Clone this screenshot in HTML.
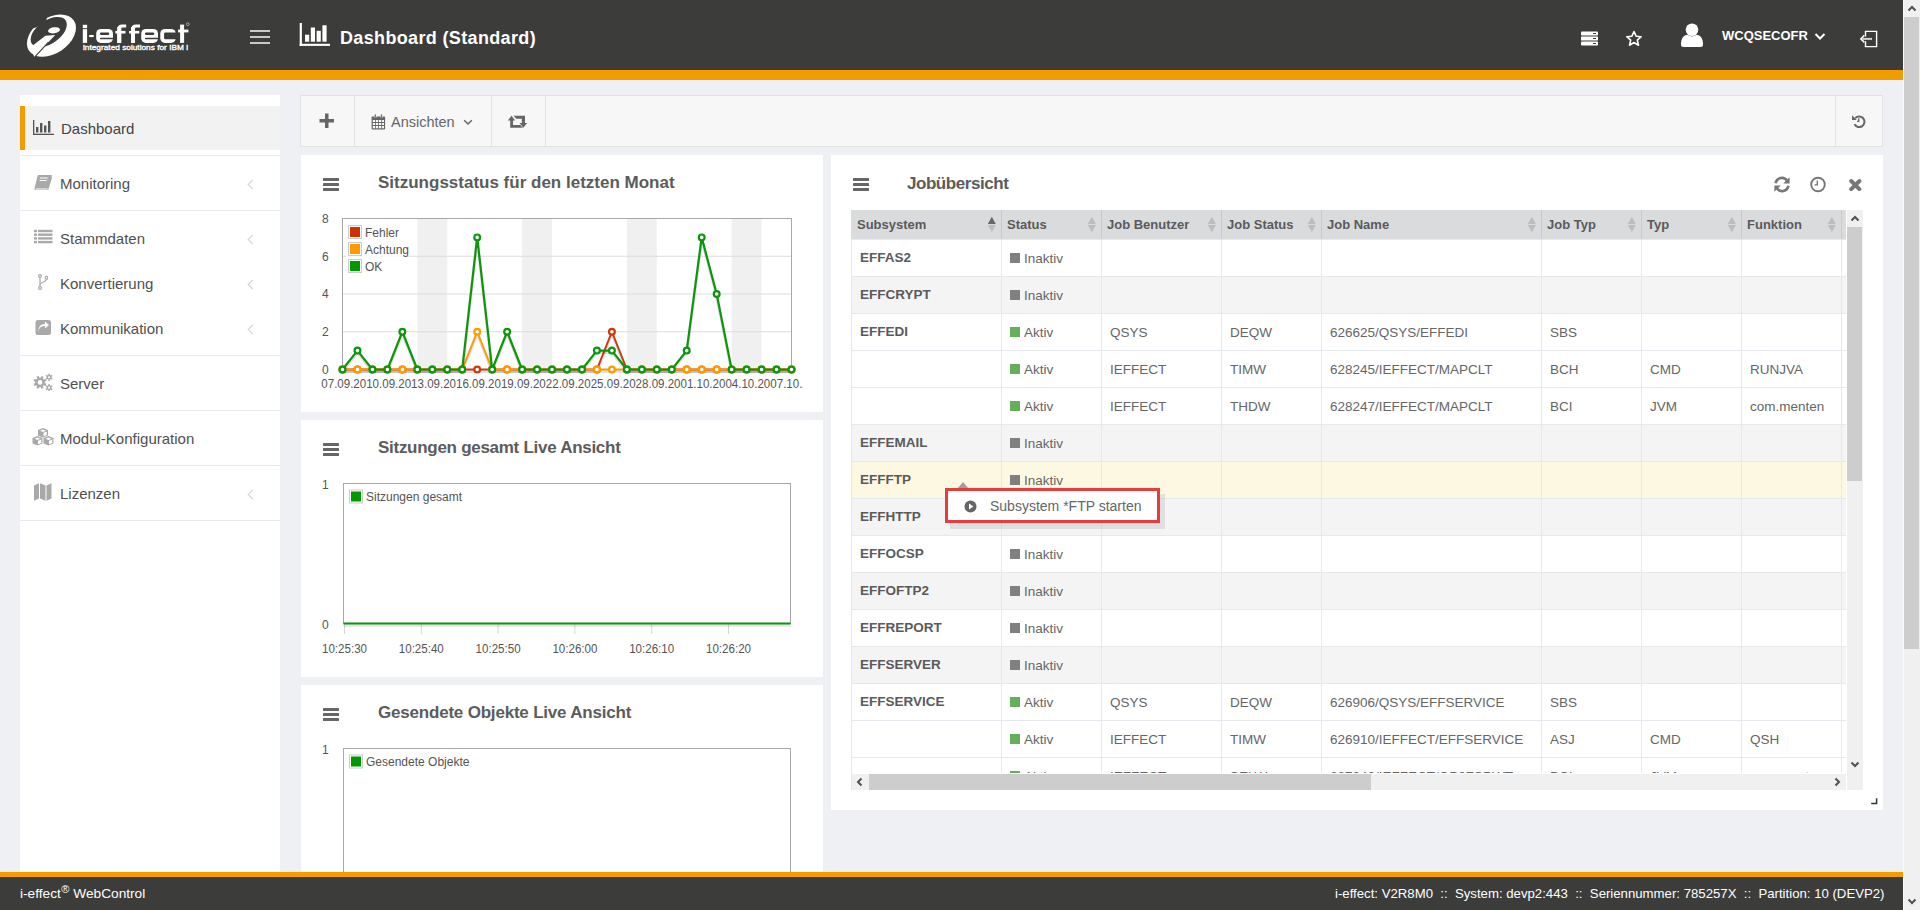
<!DOCTYPE html>
<html><head><meta charset="utf-8">
<style>
*{box-sizing:border-box;margin:0;padding:0}
html,body{width:1920px;height:910px;overflow:hidden}
body{background:#eef0f4;font-family:"Liberation Sans",sans-serif;position:relative;color:#555}
.abs{position:absolute}
#hdr{left:0;top:0;width:1903px;height:70px;background:#3c3c3b}
#hdrbar{left:0;top:70px;width:1903px;height:10px;background:#f39c00}
#ftrbar{left:0;top:872px;width:1903px;height:5px;background:#f39c00}
#ftr{left:0;top:877px;width:1903px;height:33px;background:#3c3c3b;color:#fff;font-size:13px}
#vscroll{left:1903px;top:0;width:17px;height:910px;background:#f0f0f0}
#side{left:20px;top:95px;width:260px;height:777px;background:#fff}
.sep{position:absolute;left:0;width:260px;height:1px;background:#eaeaea}
.mi{position:absolute;left:40px;font-size:15px;color:#505050;white-space:nowrap}
.chev{position:absolute;left:229px;width:7px;height:7px;border-left:1.3px solid #cfcfcf;border-bottom:1.3px solid #cfcfcf;transform:rotate(45deg)}
#tb{left:300px;top:95px;width:1583px;height:52px;background:#f7f7f7;border:1px solid #e3e3e3}
.tbsep{position:absolute;top:0;width:1px;height:50px;background:#e3e3e3}
.panel{position:absolute;background:#fff}
.ptitle{position:absolute;font-size:17px;font-weight:bold;color:#5c5c5c;white-space:nowrap}
.burger{position:absolute;width:16px;height:13px}
.burger i{position:absolute;left:0;width:16px;height:2.6px;background:#666;border-radius:0.5px}
svg text{font-family:"Liberation Sans",sans-serif}
.th{position:absolute;top:7px;font-size:13px;font-weight:bold;color:#5a5a5a;white-space:nowrap}
.td{position:absolute;font-size:13.5px;color:#666;white-space:nowrap}
.tdb{position:absolute;font-size:13.5px;font-weight:bold;color:#5a5a5a;white-space:nowrap}
</style></head>
<body>
<div id="hdr" class="abs">
 <svg class="abs" style="left:0;top:0" width="200" height="70" viewBox="0 0 200 70">
  <ellipse cx="51.45" cy="35.7" rx="27.04" ry="17.8" transform="rotate(-34 51.45 35.7)" fill="#fff"/>
  <ellipse cx="48.75" cy="32" rx="20.5" ry="11.6" transform="rotate(-34.7 48.75 32)" fill="#3c3c3b"/>
  <path fill="#3c3c3b" d="M10 5 H48 L46.5 20.4 L36.6 27.3 L10 35 Z"/>
  <path fill="#fff" d="M45.4 35.7 L55.2 35.1 L34.3 57.2 L32 50 L33.4 44.9 Z"/>
  <path d="M48.5 42.2 L33.3 58.6" stroke="#3c3c3b" stroke-width="1.1"/>
  <ellipse cx="54" cy="30.3" rx="6" ry="3" transform="rotate(-8 54 30.3)" fill="#fff"/>
  <rect x="82.8" y="24.8" width="4.3" height="3.4" fill="#fff"/><rect x="82.8" y="29.2" width="4.3" height="13.7" fill="#fff"/><rect x="89.2" y="35" width="4.5" height="2.1" fill="#fff"/><rect x="96.2" y="28.9" width="16.8" height="14" rx="4.6" fill="#fff"/><rect x="100.0" y="32.5" width="9.2" height="2.4" rx="1" fill="#3c3c3b"/><rect x="100.0" y="37.7" width="13.5" height="1.6" rx="0.6" fill="#3c3c3b"/><rect x="117.3" y="27" width="3.9" height="15.9" fill="#fff"/><path d="M117.3 42.9 V29.5 Q117.3 24.6 122.2 24.6 H126.2 V27.5 H122.5 Q121.2 27.5 121.2 28.8 V42.9 Z" fill="#fff"/><rect x="115.3" y="30.9" width="10.2" height="2.6" fill="#fff"/><rect x="131.1" y="27" width="3.9" height="15.9" fill="#fff"/><path d="M131.1 42.9 V29.5 Q131.1 24.6 136.0 24.6 H140.0 V27.5 H136.29999999999998 Q135.0 27.5 135.0 28.8 V42.9 Z" fill="#fff"/><rect x="129.1" y="30.9" width="10.2" height="2.6" fill="#fff"/><rect x="141.2" y="28.9" width="16.8" height="14" rx="4.6" fill="#fff"/><rect x="145.0" y="32.5" width="9.2" height="2.4" rx="1" fill="#3c3c3b"/><rect x="145.0" y="37.7" width="13.5" height="1.6" rx="0.6" fill="#3c3c3b"/><rect x="160.3" y="28.9" width="15.4" height="14" rx="4.6" fill="#fff"/><rect x="164.1" y="32.5" width="13" height="6.8" rx="1.2" fill="#3c3c3b"/><rect x="180.1" y="24.6" width="4" height="18.3" fill="#fff"/><rect x="178.1" y="29.6" width="10.3" height="2.8" fill="#fff"/>
  <text x="83" y="50.4" fill="#fff" stroke="#fff" stroke-width="0.3" font-family="Liberation Sans" font-size="6.6" textLength="105" lengthAdjust="spacingAndGlyphs">integrated solutions for IBM i</text>
  <circle cx="187.8" cy="24.2" r="1.4" fill="none" stroke="#ddd" stroke-width="0.6"/>
 </svg>
 <div class="abs" style="left:250px;top:30px;width:20px;height:2px;background:#c9c9c9"></div>
 <div class="abs" style="left:250px;top:36px;width:20px;height:2px;background:#c9c9c9"></div>
 <div class="abs" style="left:250px;top:42px;width:20px;height:2px;background:#c9c9c9"></div>
 <svg class="abs" style="left:299px;top:22px" width="32" height="25" viewBox="0 0 32 25">
  <g fill="#fff"><rect x="0.7" y="1" width="2.2" height="23"/><rect x="0.7" y="21.8" width="30.3" height="2.1"/>
  <rect x="6" y="12.7" width="4.2" height="7"/><rect x="11.8" y="5.5" width="4.2" height="14.2"/><rect x="17.6" y="8.8" width="4.2" height="10.9"/><rect x="23.4" y="3.3" width="4.2" height="16.4"/></g>
 </svg>
 <div class="abs" style="left:340px;top:28px;font-size:18px;font-weight:bold;color:#fff;letter-spacing:0.35px;white-space:nowrap">Dashboard (Standard)</div>
 <svg class="abs" style="left:1580px;top:31px" width="19" height="15" viewBox="0 0 19 15">
  <g fill="#fff"><rect x="1" y="0.5" width="17" height="4" rx="1"/><rect x="1" y="5.5" width="17" height="4" rx="0.5"/><rect x="1" y="10.5" width="17" height="4" rx="1"/></g>
  <g fill="#3c3c3b"><rect x="13" y="2" width="3" height="1"/><rect x="13" y="7" width="3" height="1"/><rect x="13" y="12" width="3" height="1"/></g>
 </svg>
 <svg class="abs" style="left:1625px;top:30px" width="18" height="17" viewBox="0 0 18 17">
  <path d="M9 1.5 L11.1 6.2 L16.2 6.7 L12.3 10.1 L13.5 15.2 L9 12.5 L4.5 15.2 L5.7 10.1 L1.8 6.7 L6.9 6.2 Z" fill="none" stroke="#fff" stroke-width="1.6" stroke-linejoin="round"/>
 </svg>
 <svg class="abs" style="left:1680px;top:23px" width="24" height="25" viewBox="0 0 24 25">
  <g fill="#fff"><circle cx="12" cy="6.8" r="6.3"/><path d="M1 21.5 C1 16 3 12.5 7 11.8 L12 13.6 L17 11.8 C21 12.5 23 16 23 21.5 Q23 24 20.5 24 H3.5 Q1 24 1 21.5 Z"/></g>
 </svg>
 <div class="abs" style="left:1722px;top:28px;font-size:13px;font-weight:bold;color:#fff;white-space:nowrap">WCQSECOFR</div>
 <svg class="abs" style="left:1814px;top:32px" width="12" height="9" viewBox="0 0 12 9">
  <path d="M1.5 2 L6 6.5 L10.5 2" fill="none" stroke="#fff" stroke-width="2"/>
 </svg>
 <svg class="abs" style="left:1855px;top:25px" width="30" height="27" viewBox="1855 25 30 27">
  <path d="M1865.5 36.6 V31.4 H1876.6 V46.6 H1865.5 V41.2" fill="none" stroke="#fff" stroke-width="1.4"/>
  <path d="M1864.3 35.4 L1860.8 38.9 L1864.3 42.4" fill="none" stroke="#fff" stroke-width="1.5"/>
  <rect x="1862.2" y="37.9" width="9.8" height="2" fill="#d0d0d0"/>
 </svg>
</div>
<div id="hdrbar" class="abs"></div>

<div id="side" class="abs">
 <div class="abs" style="left:0;top:11px;width:260px;height:44px;background:#f2f2f2"></div>
 <div class="abs" style="left:0;top:11px;width:5px;height:44px;background:#f39c00"></div>
 <div class="sep" style="top:60px"></div>
 <div class="sep" style="top:115px"></div>
 <div class="sep" style="top:260px"></div>
 <div class="sep" style="top:315px"></div>
 <div class="sep" style="top:370px"></div>
 <div class="sep" style="top:425px"></div>
 <svg class="abs" style="left:12px;top:24px" width="23" height="17" viewBox="0 0 23 17">
  <g fill="#555"><rect x="1" y="1" width="1.3" height="15"/><rect x="1" y="14.7" width="21" height="1.3"/>
  <rect x="4" y="8" width="2.4" height="5.5"/><rect x="8" y="4" width="2.4" height="9.5"/><rect x="12" y="6.5" width="2.4" height="7"/><rect x="16" y="2" width="2.4" height="11.5"/></g>
 </svg>
 <div class="mi" style="top:25px;left:41px;color:#444">Dashboard</div>

 <svg class="abs" style="left:14px;top:79px" width="19" height="17" viewBox="0 0 19 17">
  <path d="M4.5 1 H17 C17.6 1 18 1.4 17.8 2 L14.5 13.5 C14.3 14.2 13.8 14.5 13 14.5 H2 L1.3 15.5 H13.5 L17.5 3 L18.2 3.3 L14.2 16 H1.2 C0.5 16 0.2 15.5 0.4 14.8 L3.6 1.8 C3.8 1.3 4 1 4.5 1 Z" fill="#a9a9a9"/>
  <rect x="7" y="3.5" width="7.5" height="1" fill="#fff" transform="skewX(-12)"/>
  <rect x="7" y="6" width="7" height="1" fill="#fff" transform="skewX(-12)"/>
 </svg>
 <div class="mi" style="top:80px">Monitoring</div>
 <div class="chev" style="top:86px"></div>

 <svg class="abs" style="left:14px;top:134px" width="19" height="15" viewBox="0 0 19 15">
  <g fill="#a9a9a9"><rect x="0" y="0.8" width="3" height="2.4"/><rect x="4" y="0.8" width="14.5" height="2.4"/>
  <rect x="0" y="4.5" width="3" height="2.4"/><rect x="4" y="4.5" width="14.5" height="2.4"/>
  <rect x="0" y="8.2" width="3" height="2.4"/><rect x="4" y="8.2" width="14.5" height="2.4"/>
  <rect x="0" y="11.9" width="3" height="2.4"/><rect x="4" y="11.9" width="14.5" height="2.4"/></g>
 </svg>
 <div class="mi" style="top:135px">Stammdaten</div>
 <div class="chev" style="top:141px"></div>

 <svg class="abs" style="left:16px;top:179px" width="12" height="16" viewBox="0 0 12 16">
  <g fill="none" stroke="#a9a9a9" stroke-width="1.2"><circle cx="4" cy="2" r="1.4"/><circle cx="4" cy="14" r="1.4"/><circle cx="10.5" cy="3.8" r="1.4"/>
  <path d="M4 3.4 V12.6"/><path d="M10.5 5.2 C10.5 8 4.5 8 4.2 10.5"/></g>
 </svg>
 <div class="mi" style="top:180px">Konvertierung</div>
 <div class="chev" style="top:186px"></div>

 <svg class="abs" style="left:15px;top:224px" width="17" height="16" viewBox="0 0 17 16">
  <rect x="0.5" y="1" width="15.5" height="15" rx="2.5" fill="#a9a9a9"/>
  <path d="M3.5 13.5 C3.5 9 6 7 10 7 V9.5 L14 6 L10 2.5 V5 C5.5 5 3 8 3.5 13.5 Z" fill="#fff"/>
 </svg>
 <div class="mi" style="top:225px">Kommunikation</div>
 <div class="chev" style="top:231px"></div>

 <svg class="abs" style="left:13px;top:278px" width="21" height="18" viewBox="0 0 21 18"><circle cx="7" cy="9.4" r="4.7" fill="#a9a9a9"/><rect x="5.80" y="2.90" width="2.4" height="2.8" fill="#a9a9a9" transform="rotate(22.5 7 9.4)"/><rect x="5.80" y="2.90" width="2.4" height="2.8" fill="#a9a9a9" transform="rotate(67.5 7 9.4)"/><rect x="5.80" y="2.90" width="2.4" height="2.8" fill="#a9a9a9" transform="rotate(112.5 7 9.4)"/><rect x="5.80" y="2.90" width="2.4" height="2.8" fill="#a9a9a9" transform="rotate(157.5 7 9.4)"/><rect x="5.80" y="2.90" width="2.4" height="2.8" fill="#a9a9a9" transform="rotate(202.5 7 9.4)"/><rect x="5.80" y="2.90" width="2.4" height="2.8" fill="#a9a9a9" transform="rotate(247.5 7 9.4)"/><rect x="5.80" y="2.90" width="2.4" height="2.8" fill="#a9a9a9" transform="rotate(292.5 7 9.4)"/><rect x="5.80" y="2.90" width="2.4" height="2.8" fill="#a9a9a9" transform="rotate(337.5 7 9.4)"/><circle cx="7" cy="9.4" r="2.3" fill="#fff"/><circle cx="16.1" cy="4.3" r="2.4" fill="#a9a9a9"/><rect x="15.40" y="0.60" width="1.4" height="2.3" fill="#a9a9a9" transform="rotate(0.0 16.1 4.3)"/><rect x="15.40" y="0.60" width="1.4" height="2.3" fill="#a9a9a9" transform="rotate(60.0 16.1 4.3)"/><rect x="15.40" y="0.60" width="1.4" height="2.3" fill="#a9a9a9" transform="rotate(120.0 16.1 4.3)"/><rect x="15.40" y="0.60" width="1.4" height="2.3" fill="#a9a9a9" transform="rotate(180.0 16.1 4.3)"/><rect x="15.40" y="0.60" width="1.4" height="2.3" fill="#a9a9a9" transform="rotate(240.0 16.1 4.3)"/><rect x="15.40" y="0.60" width="1.4" height="2.3" fill="#a9a9a9" transform="rotate(300.0 16.1 4.3)"/><circle cx="16.1" cy="4.3" r="1.1" fill="#fff"/><circle cx="16.1" cy="14.7" r="2.4" fill="#a9a9a9"/><rect x="15.40" y="11.00" width="1.4" height="2.3" fill="#a9a9a9" transform="rotate(0.0 16.1 14.7)"/><rect x="15.40" y="11.00" width="1.4" height="2.3" fill="#a9a9a9" transform="rotate(60.0 16.1 14.7)"/><rect x="15.40" y="11.00" width="1.4" height="2.3" fill="#a9a9a9" transform="rotate(120.0 16.1 14.7)"/><rect x="15.40" y="11.00" width="1.4" height="2.3" fill="#a9a9a9" transform="rotate(180.0 16.1 14.7)"/><rect x="15.40" y="11.00" width="1.4" height="2.3" fill="#a9a9a9" transform="rotate(240.0 16.1 14.7)"/><rect x="15.40" y="11.00" width="1.4" height="2.3" fill="#a9a9a9" transform="rotate(300.0 16.1 14.7)"/><circle cx="16.1" cy="14.7" r="1.1" fill="#fff"/></svg>
 <div class="mi" style="top:280px">Server</div>

 <svg class="abs" style="left:11px;top:332px" width="24" height="20" viewBox="0 0 24 20">
  <g fill="#a9a9a9">
   <path d="M12 1 L17 3 V8.5 L12 10.5 L7 8.5 V3 Z"/>
   <path d="M6.5 9 L11.5 11 V16.5 L6.5 18.5 L1.5 16.5 V11 Z"/>
   <path d="M17.5 9 L22.5 11 V16.5 L17.5 18.5 L12.5 16.5 V11 Z"/>
  </g>
  <g fill="#fff"><path d="M12 2.5 L15 3.7 L12 5 L9 3.7 Z"/><path d="M12.5 5.8 L15.8 4.5 V8 L12.5 9.3 Z"/>
  <path d="M6.5 10.5 L9.5 11.7 L6.5 13 L3.5 11.7 Z"/><path d="M7 13.8 L10.3 12.5 V16 L7 17.3 Z"/>
  <path d="M17.5 10.5 L20.5 11.7 L17.5 13 L14.5 11.7 Z"/><path d="M18 13.8 L21.3 12.5 V16 L18 17.3 Z"/></g>
 </svg>
 <div class="mi" style="top:335px">Modul-Konfiguration</div>

 <svg class="abs" style="left:13px;top:387px" width="20" height="20" viewBox="0 0 20 20">
  <g fill="#a9a9a9"><path d="M1 3.5 L6 1.3 V16.5 L1 18.7 Z"/><path d="M7 1.3 L12.5 3.5 V18.7 L7 16.5 Z"/><path d="M13.5 3.5 L18.5 1.3 V16.5 L13.5 18.7 Z"/></g>
 </svg>
 <div class="mi" style="top:390px">Lizenzen</div>
 <div class="chev" style="top:396px"></div>
</div>

<div id="tb" class="abs">
 <div class="tbsep" style="left:53px"></div>
 <div class="tbsep" style="left:190px"></div>
 <div class="tbsep" style="left:244px"></div>
 <div class="tbsep" style="left:1534px"></div>
 <svg class="abs" style="left:18px;top:17px" width="16" height="16" viewBox="0 0 16 16">
  <path d="M6 0.5 H9.5 V6 H15 V9.5 H9.5 V15 H6 V9.5 H0.5 V6 H6 Z" fill="#666"/>
 </svg>
 <svg class="abs" style="left:70px;top:18px" width="15" height="16" viewBox="0 0 15 16">
  <g fill="#666"><rect x="0.6" y="2.5" width="13.5" height="13" rx="0.8"/></g>
  <g fill="#f7f7f7"><rect x="1.8" y="6" width="2.3" height="2"/><rect x="4.9" y="6" width="2.3" height="2"/><rect x="8" y="6" width="2.3" height="2"/><rect x="11.1" y="6" width="1.9" height="2"/>
  <rect x="1.8" y="9" width="2.3" height="2"/><rect x="4.9" y="9" width="2.3" height="2"/><rect x="8" y="9" width="2.3" height="2"/><rect x="11.1" y="9" width="1.9" height="2"/>
  <rect x="1.8" y="12" width="2.3" height="2.3"/><rect x="4.9" y="12" width="2.3" height="2.3"/><rect x="8" y="12" width="2.3" height="2.3"/><rect x="11.1" y="12" width="1.9" height="2.3"/>
  <rect x="3" y="0" width="2.5" height="3.5"/><rect x="9.2" y="0" width="2.5" height="3.5"/></g>
  <g fill="#666"><rect x="3.6" y="0.5" width="1.3" height="3.2"/><rect x="9.8" y="0.5" width="1.3" height="3.2"/></g>
 </svg>
 <div class="abs" style="left:90px;top:18px;font-size:14.5px;color:#666;white-space:nowrap">Ansichten</div>
 <svg class="abs" style="left:162px;top:23px" width="10" height="7" viewBox="0 0 10 7">
  <path d="M1.2 1.2 L5 5 L8.8 1.2" fill="none" stroke="#666" stroke-width="1.5"/>
 </svg>
 <svg class="abs" style="left:205px;top:19px" width="22" height="14" viewBox="0 0 22 14">
  <g fill="#666">
   <path d="M5.5 0.8 L9.2 5.5 H7 V10 H14.2 L16.8 12.8 H4.2 V5.5 H1.8 Z"/>
   <path d="M7.5 0.8 H19 V8 H21.2 L17.3 12.8 L13.5 8 H15.8 V3.7 H10.2 Z"/>
  </g>
 </svg>
 <svg class="abs" style="left:1550px;top:18px" width="15" height="14" viewBox="0 0 15 14">
  <path d="M4.2 4.2 A5.3 5.3 0 1 1 3.5 10.3" fill="none" stroke="#666" stroke-width="2"/>
  <path d="M1 1.2 V6 H5.8 Z" fill="#666"/>
  <path d="M7.8 4.3 V7.4 H6" fill="none" stroke="#666" stroke-width="1.3"/>
 </svg>
</div>

<div class="panel" style="left:301px;top:155px;width:522px;height:257px"></div>
<div class="burger" style="left:323px;top:178px"><i style="top:0"></i><i style="top:5px"></i><i style="top:10px"></i></div>
<div class="ptitle" style="left:378px;top:173px">Sitzungsstatus für den letzten Monat</div>
<svg class="abs" style="left:301px;top:155px" width="522" height="257" viewBox="301 155 522 257">
<defs><clipPath id="c1"><rect x="301" y="155" width="502" height="257"/></clipPath></defs>
<rect x="417.33" y="218.5" width="29.93" height="151.0" fill="#f0f0f0"/>
<rect x="522.10" y="218.5" width="29.93" height="151.0" fill="#f0f0f0"/>
<rect x="626.87" y="218.5" width="29.93" height="151.0" fill="#f0f0f0"/>
<rect x="731.63" y="218.5" width="29.93" height="151.0" fill="#f0f0f0"/>
<line x1="342.5" x2="791.5" y1="331.75" y2="331.75" stroke="#dcdcdc" stroke-width="1"/>
<line x1="342.5" x2="791.5" y1="294.00" y2="294.00" stroke="#dcdcdc" stroke-width="1"/>
<line x1="342.5" x2="791.5" y1="256.25" y2="256.25" stroke="#dcdcdc" stroke-width="1"/>
<rect x="342.5" y="218.5" width="449.0" height="151.0" fill="none" stroke="#a8a8a8" stroke-width="1"/>
<text x="325.4" y="373.80" text-anchor="middle" font-size="12" fill="#545454">0</text>
<text x="325.4" y="336.05" text-anchor="middle" font-size="12" fill="#545454">2</text>
<text x="325.4" y="298.30" text-anchor="middle" font-size="12" fill="#545454">4</text>
<text x="325.4" y="260.55" text-anchor="middle" font-size="12" fill="#545454">6</text>
<text x="325.4" y="222.80" text-anchor="middle" font-size="12" fill="#545454">8</text>
<g clip-path="url(#c1)">
<text x="321.30" y="387.8" font-size="12" fill="#545454" textLength="44.9" lengthAdjust="spacingAndGlyphs">07.09.20</text>
<text x="366.20" y="387.8" font-size="12" fill="#545454" textLength="44.9" lengthAdjust="spacingAndGlyphs">10.09.20</text>
<text x="411.10" y="387.8" font-size="12" fill="#545454" textLength="44.9" lengthAdjust="spacingAndGlyphs">13.09.20</text>
<text x="456.00" y="387.8" font-size="12" fill="#545454" textLength="44.9" lengthAdjust="spacingAndGlyphs">16.09.20</text>
<text x="500.90" y="387.8" font-size="12" fill="#545454" textLength="44.9" lengthAdjust="spacingAndGlyphs">19.09.20</text>
<text x="545.80" y="387.8" font-size="12" fill="#545454" textLength="44.9" lengthAdjust="spacingAndGlyphs">22.09.20</text>
<text x="590.70" y="387.8" font-size="12" fill="#545454" textLength="44.9" lengthAdjust="spacingAndGlyphs">25.09.20</text>
<text x="635.60" y="387.8" font-size="12" fill="#545454" textLength="44.9" lengthAdjust="spacingAndGlyphs">28.09.20</text>
<text x="680.50" y="387.8" font-size="12" fill="#545454" textLength="44.9" lengthAdjust="spacingAndGlyphs">01.10.20</text>
<text x="725.40" y="387.8" font-size="12" fill="#545454" textLength="44.9" lengthAdjust="spacingAndGlyphs">04.10.20</text>
<text x="770.30" y="387.8" font-size="12" fill="#545454" textLength="44.9" lengthAdjust="spacingAndGlyphs">07.10.20</text>
</g>
<polyline points="342.50,369.50 357.47,369.50 372.43,369.50 387.40,369.50 402.37,369.50 417.33,369.50 432.30,369.50 447.27,369.50 462.23,369.50 477.20,369.50 492.17,369.50 507.13,369.50 522.10,369.50 537.07,369.50 552.03,369.50 567.00,369.50 581.97,369.50 596.93,369.50 611.90,331.75 626.87,369.50 641.83,369.50 656.80,369.50 671.77,369.50 686.73,369.50 701.70,369.50 716.67,369.50 731.63,369.50 746.60,369.50 761.57,369.50 776.53,369.50 791.50,369.50" fill="none" stroke="rgba(0,0,0,0.12)" stroke-width="3" transform="translate(0,2)" stroke-linejoin="round"/>
<polyline points="342.50,369.50 357.47,369.50 372.43,369.50 387.40,369.50 402.37,369.50 417.33,369.50 432.30,369.50 447.27,369.50 462.23,369.50 477.20,369.50 492.17,369.50 507.13,369.50 522.10,369.50 537.07,369.50 552.03,369.50 567.00,369.50 581.97,369.50 596.93,369.50 611.90,331.75 626.87,369.50 641.83,369.50 656.80,369.50 671.77,369.50 686.73,369.50 701.70,369.50 716.67,369.50 731.63,369.50 746.60,369.50 761.57,369.50 776.53,369.50 791.50,369.50" fill="none" stroke="#cb3a0c" stroke-width="2" stroke-linejoin="round"/>
<circle cx="342.50" cy="369.50" r="2.9" fill="#fff" stroke="#cb3a0c" stroke-width="2.2"/>
<circle cx="357.47" cy="369.50" r="2.9" fill="#fff" stroke="#cb3a0c" stroke-width="2.2"/>
<circle cx="372.43" cy="369.50" r="2.9" fill="#fff" stroke="#cb3a0c" stroke-width="2.2"/>
<circle cx="387.40" cy="369.50" r="2.9" fill="#fff" stroke="#cb3a0c" stroke-width="2.2"/>
<circle cx="402.37" cy="369.50" r="2.9" fill="#fff" stroke="#cb3a0c" stroke-width="2.2"/>
<circle cx="417.33" cy="369.50" r="2.9" fill="#fff" stroke="#cb3a0c" stroke-width="2.2"/>
<circle cx="432.30" cy="369.50" r="2.9" fill="#fff" stroke="#cb3a0c" stroke-width="2.2"/>
<circle cx="447.27" cy="369.50" r="2.9" fill="#fff" stroke="#cb3a0c" stroke-width="2.2"/>
<circle cx="462.23" cy="369.50" r="2.9" fill="#fff" stroke="#cb3a0c" stroke-width="2.2"/>
<circle cx="477.20" cy="369.50" r="2.9" fill="#fff" stroke="#cb3a0c" stroke-width="2.2"/>
<circle cx="492.17" cy="369.50" r="2.9" fill="#fff" stroke="#cb3a0c" stroke-width="2.2"/>
<circle cx="507.13" cy="369.50" r="2.9" fill="#fff" stroke="#cb3a0c" stroke-width="2.2"/>
<circle cx="522.10" cy="369.50" r="2.9" fill="#fff" stroke="#cb3a0c" stroke-width="2.2"/>
<circle cx="537.07" cy="369.50" r="2.9" fill="#fff" stroke="#cb3a0c" stroke-width="2.2"/>
<circle cx="552.03" cy="369.50" r="2.9" fill="#fff" stroke="#cb3a0c" stroke-width="2.2"/>
<circle cx="567.00" cy="369.50" r="2.9" fill="#fff" stroke="#cb3a0c" stroke-width="2.2"/>
<circle cx="581.97" cy="369.50" r="2.9" fill="#fff" stroke="#cb3a0c" stroke-width="2.2"/>
<circle cx="596.93" cy="369.50" r="2.9" fill="#fff" stroke="#cb3a0c" stroke-width="2.2"/>
<circle cx="611.90" cy="331.75" r="2.9" fill="#fff" stroke="#cb3a0c" stroke-width="2.2"/>
<circle cx="626.87" cy="369.50" r="2.9" fill="#fff" stroke="#cb3a0c" stroke-width="2.2"/>
<circle cx="641.83" cy="369.50" r="2.9" fill="#fff" stroke="#cb3a0c" stroke-width="2.2"/>
<circle cx="656.80" cy="369.50" r="2.9" fill="#fff" stroke="#cb3a0c" stroke-width="2.2"/>
<circle cx="671.77" cy="369.50" r="2.9" fill="#fff" stroke="#cb3a0c" stroke-width="2.2"/>
<circle cx="686.73" cy="369.50" r="2.9" fill="#fff" stroke="#cb3a0c" stroke-width="2.2"/>
<circle cx="701.70" cy="369.50" r="2.9" fill="#fff" stroke="#cb3a0c" stroke-width="2.2"/>
<circle cx="716.67" cy="369.50" r="2.9" fill="#fff" stroke="#cb3a0c" stroke-width="2.2"/>
<circle cx="731.63" cy="369.50" r="2.9" fill="#fff" stroke="#cb3a0c" stroke-width="2.2"/>
<circle cx="746.60" cy="369.50" r="2.9" fill="#fff" stroke="#cb3a0c" stroke-width="2.2"/>
<circle cx="761.57" cy="369.50" r="2.9" fill="#fff" stroke="#cb3a0c" stroke-width="2.2"/>
<circle cx="776.53" cy="369.50" r="2.9" fill="#fff" stroke="#cb3a0c" stroke-width="2.2"/>
<circle cx="791.50" cy="369.50" r="2.9" fill="#fff" stroke="#cb3a0c" stroke-width="2.2"/>
<polyline points="342.50,369.50 357.47,369.50 372.43,369.50 387.40,369.50 402.37,369.50 417.33,369.50 432.30,369.50 447.27,369.50 462.23,369.50 477.20,331.75 492.17,369.50 507.13,369.50 522.10,369.50 537.07,369.50 552.03,369.50 567.00,369.50 581.97,369.50 596.93,369.50 611.90,369.50 626.87,369.50 641.83,369.50 656.80,369.50 671.77,369.50 686.73,369.50 701.70,369.50 716.67,369.50 731.63,369.50 746.60,369.50 761.57,369.50 776.53,369.50 791.50,369.50" fill="none" stroke="rgba(0,0,0,0.12)" stroke-width="3" transform="translate(0,2)" stroke-linejoin="round"/>
<polyline points="342.50,369.50 357.47,369.50 372.43,369.50 387.40,369.50 402.37,369.50 417.33,369.50 432.30,369.50 447.27,369.50 462.23,369.50 477.20,331.75 492.17,369.50 507.13,369.50 522.10,369.50 537.07,369.50 552.03,369.50 567.00,369.50 581.97,369.50 596.93,369.50 611.90,369.50 626.87,369.50 641.83,369.50 656.80,369.50 671.77,369.50 686.73,369.50 701.70,369.50 716.67,369.50 731.63,369.50 746.60,369.50 761.57,369.50 776.53,369.50 791.50,369.50" fill="none" stroke="#ff9900" stroke-width="2" stroke-linejoin="round"/>
<circle cx="342.50" cy="369.50" r="2.9" fill="#fff" stroke="#ff9900" stroke-width="2.2"/>
<circle cx="357.47" cy="369.50" r="2.9" fill="#fff" stroke="#ff9900" stroke-width="2.2"/>
<circle cx="372.43" cy="369.50" r="2.9" fill="#fff" stroke="#ff9900" stroke-width="2.2"/>
<circle cx="387.40" cy="369.50" r="2.9" fill="#fff" stroke="#ff9900" stroke-width="2.2"/>
<circle cx="402.37" cy="369.50" r="2.9" fill="#fff" stroke="#ff9900" stroke-width="2.2"/>
<circle cx="417.33" cy="369.50" r="2.9" fill="#fff" stroke="#ff9900" stroke-width="2.2"/>
<circle cx="432.30" cy="369.50" r="2.9" fill="#fff" stroke="#ff9900" stroke-width="2.2"/>
<circle cx="447.27" cy="369.50" r="2.9" fill="#fff" stroke="#ff9900" stroke-width="2.2"/>
<circle cx="462.23" cy="369.50" r="2.9" fill="#fff" stroke="#ff9900" stroke-width="2.2"/>
<circle cx="477.20" cy="331.75" r="2.9" fill="#fff" stroke="#ff9900" stroke-width="2.2"/>
<circle cx="492.17" cy="369.50" r="2.9" fill="#fff" stroke="#ff9900" stroke-width="2.2"/>
<circle cx="507.13" cy="369.50" r="2.9" fill="#fff" stroke="#ff9900" stroke-width="2.2"/>
<circle cx="522.10" cy="369.50" r="2.9" fill="#fff" stroke="#ff9900" stroke-width="2.2"/>
<circle cx="537.07" cy="369.50" r="2.9" fill="#fff" stroke="#ff9900" stroke-width="2.2"/>
<circle cx="552.03" cy="369.50" r="2.9" fill="#fff" stroke="#ff9900" stroke-width="2.2"/>
<circle cx="567.00" cy="369.50" r="2.9" fill="#fff" stroke="#ff9900" stroke-width="2.2"/>
<circle cx="581.97" cy="369.50" r="2.9" fill="#fff" stroke="#ff9900" stroke-width="2.2"/>
<circle cx="596.93" cy="369.50" r="2.9" fill="#fff" stroke="#ff9900" stroke-width="2.2"/>
<circle cx="611.90" cy="369.50" r="2.9" fill="#fff" stroke="#ff9900" stroke-width="2.2"/>
<circle cx="626.87" cy="369.50" r="2.9" fill="#fff" stroke="#ff9900" stroke-width="2.2"/>
<circle cx="641.83" cy="369.50" r="2.9" fill="#fff" stroke="#ff9900" stroke-width="2.2"/>
<circle cx="656.80" cy="369.50" r="2.9" fill="#fff" stroke="#ff9900" stroke-width="2.2"/>
<circle cx="671.77" cy="369.50" r="2.9" fill="#fff" stroke="#ff9900" stroke-width="2.2"/>
<circle cx="686.73" cy="369.50" r="2.9" fill="#fff" stroke="#ff9900" stroke-width="2.2"/>
<circle cx="701.70" cy="369.50" r="2.9" fill="#fff" stroke="#ff9900" stroke-width="2.2"/>
<circle cx="716.67" cy="369.50" r="2.9" fill="#fff" stroke="#ff9900" stroke-width="2.2"/>
<circle cx="731.63" cy="369.50" r="2.9" fill="#fff" stroke="#ff9900" stroke-width="2.2"/>
<circle cx="746.60" cy="369.50" r="2.9" fill="#fff" stroke="#ff9900" stroke-width="2.2"/>
<circle cx="761.57" cy="369.50" r="2.9" fill="#fff" stroke="#ff9900" stroke-width="2.2"/>
<circle cx="776.53" cy="369.50" r="2.9" fill="#fff" stroke="#ff9900" stroke-width="2.2"/>
<circle cx="791.50" cy="369.50" r="2.9" fill="#fff" stroke="#ff9900" stroke-width="2.2"/>
<polyline points="342.50,369.50 357.47,350.62 372.43,369.50 387.40,369.50 402.37,331.75 417.33,369.50 432.30,369.50 447.27,369.50 462.23,369.50 477.20,237.38 492.17,369.50 507.13,331.75 522.10,369.50 537.07,369.50 552.03,369.50 567.00,369.50 581.97,369.50 596.93,350.62 611.90,350.62 626.87,369.50 641.83,369.50 656.80,369.50 671.77,369.50 686.73,350.62 701.70,237.38 716.67,294.00 731.63,369.50 746.60,369.50 761.57,369.50 776.53,369.50 791.50,369.50" fill="none" stroke="rgba(0,0,0,0.12)" stroke-width="3" transform="translate(0,2)" stroke-linejoin="round"/>
<polyline points="342.50,369.50 357.47,350.62 372.43,369.50 387.40,369.50 402.37,331.75 417.33,369.50 432.30,369.50 447.27,369.50 462.23,369.50 477.20,237.38 492.17,369.50 507.13,331.75 522.10,369.50 537.07,369.50 552.03,369.50 567.00,369.50 581.97,369.50 596.93,350.62 611.90,350.62 626.87,369.50 641.83,369.50 656.80,369.50 671.77,369.50 686.73,350.62 701.70,237.38 716.67,294.00 731.63,369.50 746.60,369.50 761.57,369.50 776.53,369.50 791.50,369.50" fill="none" stroke="#0c960c" stroke-width="2.2" stroke-linejoin="round"/>
<circle cx="342.50" cy="369.50" r="2.9" fill="#fff" stroke="#0c960c" stroke-width="2.2"/>
<circle cx="357.47" cy="350.62" r="2.9" fill="#fff" stroke="#0c960c" stroke-width="2.2"/>
<circle cx="372.43" cy="369.50" r="2.9" fill="#fff" stroke="#0c960c" stroke-width="2.2"/>
<circle cx="387.40" cy="369.50" r="2.9" fill="#fff" stroke="#0c960c" stroke-width="2.2"/>
<circle cx="402.37" cy="331.75" r="2.9" fill="#fff" stroke="#0c960c" stroke-width="2.2"/>
<circle cx="417.33" cy="369.50" r="2.9" fill="#fff" stroke="#0c960c" stroke-width="2.2"/>
<circle cx="432.30" cy="369.50" r="2.9" fill="#fff" stroke="#0c960c" stroke-width="2.2"/>
<circle cx="447.27" cy="369.50" r="2.9" fill="#fff" stroke="#0c960c" stroke-width="2.2"/>
<circle cx="462.23" cy="369.50" r="2.9" fill="#fff" stroke="#0c960c" stroke-width="2.2"/>
<circle cx="477.20" cy="237.38" r="2.9" fill="#fff" stroke="#0c960c" stroke-width="2.2"/>
<circle cx="492.17" cy="369.50" r="2.9" fill="#fff" stroke="#0c960c" stroke-width="2.2"/>
<circle cx="507.13" cy="331.75" r="2.9" fill="#fff" stroke="#0c960c" stroke-width="2.2"/>
<circle cx="522.10" cy="369.50" r="2.9" fill="#fff" stroke="#0c960c" stroke-width="2.2"/>
<circle cx="537.07" cy="369.50" r="2.9" fill="#fff" stroke="#0c960c" stroke-width="2.2"/>
<circle cx="552.03" cy="369.50" r="2.9" fill="#fff" stroke="#0c960c" stroke-width="2.2"/>
<circle cx="567.00" cy="369.50" r="2.9" fill="#fff" stroke="#0c960c" stroke-width="2.2"/>
<circle cx="581.97" cy="369.50" r="2.9" fill="#fff" stroke="#0c960c" stroke-width="2.2"/>
<circle cx="596.93" cy="350.62" r="2.9" fill="#fff" stroke="#0c960c" stroke-width="2.2"/>
<circle cx="611.90" cy="350.62" r="2.9" fill="#fff" stroke="#0c960c" stroke-width="2.2"/>
<circle cx="626.87" cy="369.50" r="2.9" fill="#fff" stroke="#0c960c" stroke-width="2.2"/>
<circle cx="641.83" cy="369.50" r="2.9" fill="#fff" stroke="#0c960c" stroke-width="2.2"/>
<circle cx="656.80" cy="369.50" r="2.9" fill="#fff" stroke="#0c960c" stroke-width="2.2"/>
<circle cx="671.77" cy="369.50" r="2.9" fill="#fff" stroke="#0c960c" stroke-width="2.2"/>
<circle cx="686.73" cy="350.62" r="2.9" fill="#fff" stroke="#0c960c" stroke-width="2.2"/>
<circle cx="701.70" cy="237.38" r="2.9" fill="#fff" stroke="#0c960c" stroke-width="2.2"/>
<circle cx="716.67" cy="294.00" r="2.9" fill="#fff" stroke="#0c960c" stroke-width="2.2"/>
<circle cx="731.63" cy="369.50" r="2.9" fill="#fff" stroke="#0c960c" stroke-width="2.2"/>
<circle cx="746.60" cy="369.50" r="2.9" fill="#fff" stroke="#0c960c" stroke-width="2.2"/>
<circle cx="761.57" cy="369.50" r="2.9" fill="#fff" stroke="#0c960c" stroke-width="2.2"/>
<circle cx="776.53" cy="369.50" r="2.9" fill="#fff" stroke="#0c960c" stroke-width="2.2"/>
<circle cx="791.50" cy="369.50" r="2.9" fill="#fff" stroke="#0c960c" stroke-width="2.2"/>
<rect x="346" y="222" width="58" height="53" fill="#fff" opacity="0.85"/>
<rect x="348.5" y="225.5" width="13" height="13" fill="#fff" stroke="#cccccc" stroke-width="1"/>
<rect x="350" y="227.0" width="10" height="10" fill="#cc3300"/>
<text x="365" y="236.5" font-size="12" fill="#545454">Fehler</text>
<rect x="348.5" y="242.5" width="13" height="13" fill="#fff" stroke="#cccccc" stroke-width="1"/>
<rect x="350" y="244.0" width="10" height="10" fill="#ff9900"/>
<text x="365" y="253.5" font-size="12" fill="#545454">Achtung</text>
<rect x="348.5" y="259.5" width="13" height="13" fill="#fff" stroke="#cccccc" stroke-width="1"/>
<rect x="350" y="261.0" width="10" height="10" fill="#009900"/>
<text x="365" y="270.5" font-size="12" fill="#545454">OK</text>
</svg>
<div class="panel" style="left:301px;top:420px;width:522px;height:257px"></div>
<div class="burger" style="left:323px;top:443px"><i style="top:0"></i><i style="top:5px"></i><i style="top:10px"></i></div>
<div class="ptitle" style="left:378px;top:438px;letter-spacing:-0.28px">Sitzungen gesamt Live Ansicht</div>
<svg class="abs" style="left:301px;top:420px" width="522" height="257" viewBox="301 420 522 257">
<rect x="343.5" y="483.5" width="447.0" height="140.0" fill="none" stroke="#a8a8a8" stroke-width="1"/>
<text x="325.4" y="489.3" text-anchor="middle" font-size="12" fill="#545454">1</text>
<text x="325.4" y="628.7" text-anchor="middle" font-size="12" fill="#545454">0</text>
<line x1="344.5" x2="344.5" y1="624.5" y2="634.0" stroke="#d8d8d8" stroke-width="1"/>
<text x="322.0" y="652.7" font-size="12" fill="#545454" textLength="45" lengthAdjust="spacingAndGlyphs">10:25:30</text>
<line x1="421.3" x2="421.3" y1="624.5" y2="634.0" stroke="#d8d8d8" stroke-width="1"/>
<text x="398.8" y="652.7" font-size="12" fill="#545454" textLength="45" lengthAdjust="spacingAndGlyphs">10:25:40</text>
<line x1="498.1" x2="498.1" y1="624.5" y2="634.0" stroke="#d8d8d8" stroke-width="1"/>
<text x="475.6" y="652.7" font-size="12" fill="#545454" textLength="45" lengthAdjust="spacingAndGlyphs">10:25:50</text>
<line x1="574.9" x2="574.9" y1="624.5" y2="634.0" stroke="#d8d8d8" stroke-width="1"/>
<text x="552.4" y="652.7" font-size="12" fill="#545454" textLength="45" lengthAdjust="spacingAndGlyphs">10:26:00</text>
<line x1="651.7" x2="651.7" y1="624.5" y2="634.0" stroke="#d8d8d8" stroke-width="1"/>
<text x="629.2" y="652.7" font-size="12" fill="#545454" textLength="45" lengthAdjust="spacingAndGlyphs">10:26:10</text>
<line x1="728.5" x2="728.5" y1="624.5" y2="634.0" stroke="#d8d8d8" stroke-width="1"/>
<text x="706.0" y="652.7" font-size="12" fill="#545454" textLength="45" lengthAdjust="spacingAndGlyphs">10:26:20</text>
<line x1="343.5" x2="790.5" y1="625.5" y2="625.5" stroke="rgba(0,0,0,0.09)" stroke-width="3"/>
<line x1="343.5" x2="790.5" y1="623.5" y2="623.5" stroke="#0a960a" stroke-width="2"/>
<rect x="349.5" y="490.0" width="13" height="13" fill="#fff" stroke="#cccccc" stroke-width="1"/>
<rect x="351" y="491.5" width="10" height="10" fill="#009900"/>
<text x="366" y="501.0" font-size="12" fill="#545454">Sitzungen gesamt</text>
</svg>
<div class="panel" style="left:301px;top:685px;width:522px;height:200px"></div>
<div class="burger" style="left:323px;top:708px"><i style="top:0"></i><i style="top:5px"></i><i style="top:10px"></i></div>
<div class="ptitle" style="left:378px;top:703px;letter-spacing:-0.2px">Gesendete Objekte Live Ansicht</div>
<svg class="abs" style="left:301px;top:685px" width="522" height="257" viewBox="301 685 522 257">
<rect x="343.5" y="748.5" width="447.0" height="140.0" fill="none" stroke="#a8a8a8" stroke-width="1"/>
<text x="325.4" y="754.3" text-anchor="middle" font-size="12" fill="#545454">1</text>
<text x="325.4" y="893.7" text-anchor="middle" font-size="12" fill="#545454">0</text>
<line x1="344.5" x2="344.5" y1="889.5" y2="899.0" stroke="#d8d8d8" stroke-width="1"/>
<text x="322.0" y="917.7" font-size="12" fill="#545454" textLength="45" lengthAdjust="spacingAndGlyphs">10:25:30</text>
<line x1="421.3" x2="421.3" y1="889.5" y2="899.0" stroke="#d8d8d8" stroke-width="1"/>
<text x="398.8" y="917.7" font-size="12" fill="#545454" textLength="45" lengthAdjust="spacingAndGlyphs">10:25:40</text>
<line x1="498.1" x2="498.1" y1="889.5" y2="899.0" stroke="#d8d8d8" stroke-width="1"/>
<text x="475.6" y="917.7" font-size="12" fill="#545454" textLength="45" lengthAdjust="spacingAndGlyphs">10:25:50</text>
<line x1="574.9" x2="574.9" y1="889.5" y2="899.0" stroke="#d8d8d8" stroke-width="1"/>
<text x="552.4" y="917.7" font-size="12" fill="#545454" textLength="45" lengthAdjust="spacingAndGlyphs">10:26:00</text>
<line x1="651.7" x2="651.7" y1="889.5" y2="899.0" stroke="#d8d8d8" stroke-width="1"/>
<text x="629.2" y="917.7" font-size="12" fill="#545454" textLength="45" lengthAdjust="spacingAndGlyphs">10:26:10</text>
<line x1="728.5" x2="728.5" y1="889.5" y2="899.0" stroke="#d8d8d8" stroke-width="1"/>
<text x="706.0" y="917.7" font-size="12" fill="#545454" textLength="45" lengthAdjust="spacingAndGlyphs">10:26:20</text>
<line x1="343.5" x2="790.5" y1="890.5" y2="890.5" stroke="rgba(0,0,0,0.09)" stroke-width="3"/>
<line x1="343.5" x2="790.5" y1="888.5" y2="888.5" stroke="#0a960a" stroke-width="2"/>
<rect x="349.5" y="755.0" width="13" height="13" fill="#fff" stroke="#cccccc" stroke-width="1"/>
<rect x="351" y="756.5" width="10" height="10" fill="#009900"/>
<text x="366" y="766.0" font-size="12" fill="#545454">Gesendete Objekte</text>
</svg>
<div class="panel" style="left:831px;top:155px;width:1052px;height:655px"></div>
<div class="burger" style="left:853px;top:178px"><i style="top:0"></i><i style="top:5px"></i><i style="top:10px"></i></div>
<div class="ptitle" style="left:907px;top:174px;letter-spacing:-0.45px">Jobübersicht</div>
<svg class="abs" style="left:1773px;top:176px" width="18" height="17" viewBox="0 0 18 17">
 <g fill="none" stroke="#777" stroke-width="2.6"><path d="M2.6 7.2 A6.3 6.3 0 0 1 14.2 5"/><path d="M15.4 9.8 A6.3 6.3 0 0 1 3.8 12"/></g>
 <path d="M16.6 1.2 V7.6 H10.2 Z" fill="#777"/><path d="M1.4 15.8 V9.4 H7.8 Z" fill="#777"/>
</svg>
<svg class="abs" style="left:1809px;top:176px" width="18" height="17" viewBox="0 0 18 17">
 <circle cx="9" cy="8.5" r="6.8" fill="none" stroke="#777" stroke-width="1.9"/>
 <path d="M8.3 4.5 V8.9 H5.5" fill="none" stroke="#777" stroke-width="1.4"/>
</svg>
<svg class="abs" style="left:1848px;top:177px" width="14" height="14" viewBox="0 0 14 14">
 <path d="M3.2 4 L11.4 12.2 M11.4 4 L3.2 12.2" stroke="#777" stroke-width="3.9" stroke-linecap="round"/>
</svg>
<div class="abs" style="left:851px;top:210px;width:995px;height:563px;overflow:hidden">
<div class="abs" style="left:0;top:0;width:1100px;height:29px;background:#dadbdd"></div>
<div class="th" style="left:6px">Subsystem</div>
<svg class="abs" style="left:136px;top:6px" width="10" height="17" viewBox="0 0 10 17"><path d="M0.8 8 L4.8 0.8 L8.8 8 Z" fill="#676767"/><path d="M0.8 9 L4.8 16.2 L8.8 9 Z" fill="#bdbdbd"/></svg>
<div class="abs" style="left:150px;top:0;width:1px;height:29px;background:#c9cacc"></div>
<div class="th" style="left:156px">Status</div>
<svg class="abs" style="left:236px;top:6px" width="10" height="17" viewBox="0 0 10 17"><path d="M0.8 8 L4.8 0.8 L8.8 8 Z" fill="#bdbdbd"/><path d="M0.8 9 L4.8 16.2 L8.8 9 Z" fill="#bdbdbd"/></svg>
<div class="abs" style="left:250px;top:0;width:1px;height:29px;background:#c9cacc"></div>
<div class="th" style="left:256px">Job Benutzer</div>
<svg class="abs" style="left:356px;top:6px" width="10" height="17" viewBox="0 0 10 17"><path d="M0.8 8 L4.8 0.8 L8.8 8 Z" fill="#bdbdbd"/><path d="M0.8 9 L4.8 16.2 L8.8 9 Z" fill="#bdbdbd"/></svg>
<div class="abs" style="left:370px;top:0;width:1px;height:29px;background:#c9cacc"></div>
<div class="th" style="left:376px">Job Status</div>
<svg class="abs" style="left:456px;top:6px" width="10" height="17" viewBox="0 0 10 17"><path d="M0.8 8 L4.8 0.8 L8.8 8 Z" fill="#bdbdbd"/><path d="M0.8 9 L4.8 16.2 L8.8 9 Z" fill="#bdbdbd"/></svg>
<div class="abs" style="left:470px;top:0;width:1px;height:29px;background:#c9cacc"></div>
<div class="th" style="left:476px">Job Name</div>
<svg class="abs" style="left:676px;top:6px" width="10" height="17" viewBox="0 0 10 17"><path d="M0.8 8 L4.8 0.8 L8.8 8 Z" fill="#bdbdbd"/><path d="M0.8 9 L4.8 16.2 L8.8 9 Z" fill="#bdbdbd"/></svg>
<div class="abs" style="left:690px;top:0;width:1px;height:29px;background:#c9cacc"></div>
<div class="th" style="left:696px">Job Typ</div>
<svg class="abs" style="left:776px;top:6px" width="10" height="17" viewBox="0 0 10 17"><path d="M0.8 8 L4.8 0.8 L8.8 8 Z" fill="#bdbdbd"/><path d="M0.8 9 L4.8 16.2 L8.8 9 Z" fill="#bdbdbd"/></svg>
<div class="abs" style="left:790px;top:0;width:1px;height:29px;background:#c9cacc"></div>
<div class="th" style="left:796px">Typ</div>
<svg class="abs" style="left:876px;top:6px" width="10" height="17" viewBox="0 0 10 17"><path d="M0.8 8 L4.8 0.8 L8.8 8 Z" fill="#bdbdbd"/><path d="M0.8 9 L4.8 16.2 L8.8 9 Z" fill="#bdbdbd"/></svg>
<div class="abs" style="left:890px;top:0;width:1px;height:29px;background:#c9cacc"></div>
<div class="th" style="left:896px">Funktion</div>
<svg class="abs" style="left:976px;top:6px" width="10" height="17" viewBox="0 0 10 17"><path d="M0.8 8 L4.8 0.8 L8.8 8 Z" fill="#bdbdbd"/><path d="M0.8 9 L4.8 16.2 L8.8 9 Z" fill="#bdbdbd"/></svg>
<div class="abs" style="left:990px;top:0;width:1px;height:29px;background:#c9cacc"></div>
<div class="abs" style="left:0;top:29px;width:1100px;height:37px;background:#fff;border-top:1px solid #e5e9ee"></div>
<div class="abs" style="left:0;top:66px;width:1100px;height:37px;background:#f4f4f4;border-top:1px solid #e5e9ee"></div>
<div class="abs" style="left:0;top:103px;width:1100px;height:37px;background:#fff;border-top:1px solid #e5e9ee"></div>
<div class="abs" style="left:0;top:140px;width:1100px;height:37px;background:#fff;border-top:1px solid #e5e9ee"></div>
<div class="abs" style="left:0;top:177px;width:1100px;height:37px;background:#fff;border-top:1px solid #e5e9ee"></div>
<div class="abs" style="left:0;top:214px;width:1100px;height:37px;background:#f4f4f4;border-top:1px solid #e5e9ee"></div>
<div class="abs" style="left:0;top:251px;width:1100px;height:37px;background:#fdf8e2;border-top:1px solid #e5e9ee"></div>
<div class="abs" style="left:0;top:288px;width:1100px;height:37px;background:#f4f4f4;border-top:1px solid #e5e9ee"></div>
<div class="abs" style="left:0;top:325px;width:1100px;height:37px;background:#fff;border-top:1px solid #e5e9ee"></div>
<div class="abs" style="left:0;top:362px;width:1100px;height:37px;background:#f4f4f4;border-top:1px solid #e5e9ee"></div>
<div class="abs" style="left:0;top:399px;width:1100px;height:37px;background:#fff;border-top:1px solid #e5e9ee"></div>
<div class="abs" style="left:0;top:436px;width:1100px;height:37px;background:#f4f4f4;border-top:1px solid #e5e9ee"></div>
<div class="abs" style="left:0;top:473px;width:1100px;height:37px;background:#fff;border-top:1px solid #e5e9ee"></div>
<div class="abs" style="left:0;top:510px;width:1100px;height:37px;background:#fff;border-top:1px solid #e5e9ee"></div>
<div class="abs" style="left:0;top:547px;width:1100px;height:37px;background:#fff;border-top:1px solid #e5e9ee"></div>
<div class="abs" style="left:0px;top:29px;width:1px;height:560px;background:#e5e9ee"></div>
<div class="abs" style="left:150px;top:29px;width:1px;height:560px;background:#e5e9ee"></div>
<div class="abs" style="left:250px;top:29px;width:1px;height:560px;background:#e5e9ee"></div>
<div class="abs" style="left:370px;top:29px;width:1px;height:560px;background:#e5e9ee"></div>
<div class="abs" style="left:470px;top:29px;width:1px;height:560px;background:#e5e9ee"></div>
<div class="abs" style="left:690px;top:29px;width:1px;height:560px;background:#e5e9ee"></div>
<div class="abs" style="left:790px;top:29px;width:1px;height:560px;background:#e5e9ee"></div>
<div class="abs" style="left:890px;top:29px;width:1px;height:560px;background:#e5e9ee"></div>
<div class="abs" style="left:990px;top:29px;width:1px;height:560px;background:#e5e9ee"></div>
<div class="tdb" style="left:9px;top:40px">EFFAS2</div>
<div class="abs" style="left:159px;top:42.5px;width:10px;height:10px;background:#808080"></div>
<div class="td" style="left:173px;top:40.5px">Inaktiv</div>
<div class="tdb" style="left:9px;top:77px">EFFCRYPT</div>
<div class="abs" style="left:159px;top:79.5px;width:10px;height:10px;background:#808080"></div>
<div class="td" style="left:173px;top:77.5px">Inaktiv</div>
<div class="tdb" style="left:9px;top:114px">EFFEDI</div>
<div class="abs" style="left:159px;top:116.5px;width:10px;height:10px;background:#62b158"></div>
<div class="td" style="left:173px;top:114.5px">Aktiv</div>
<div class="td" style="left:259px;top:114.5px">QSYS</div>
<div class="td" style="left:379px;top:114.5px">DEQW</div>
<div class="td" style="left:479px;top:114.5px">626625/QSYS/EFFEDI</div>
<div class="td" style="left:699px;top:114.5px">SBS</div>
<div class="abs" style="left:159px;top:153.5px;width:10px;height:10px;background:#62b158"></div>
<div class="td" style="left:173px;top:151.5px">Aktiv</div>
<div class="td" style="left:259px;top:151.5px">IEFFECT</div>
<div class="td" style="left:379px;top:151.5px">TIMW</div>
<div class="td" style="left:479px;top:151.5px">628245/IEFFECT/MAPCLT</div>
<div class="td" style="left:699px;top:151.5px">BCH</div>
<div class="td" style="left:799px;top:151.5px">CMD</div>
<div class="td" style="left:899px;top:151.5px">RUNJVA</div>
<div class="abs" style="left:159px;top:190.5px;width:10px;height:10px;background:#62b158"></div>
<div class="td" style="left:173px;top:188.5px">Aktiv</div>
<div class="td" style="left:259px;top:188.5px">IEFFECT</div>
<div class="td" style="left:379px;top:188.5px">THDW</div>
<div class="td" style="left:479px;top:188.5px">628247/IEFFECT/MAPCLT</div>
<div class="td" style="left:699px;top:188.5px">BCI</div>
<div class="td" style="left:799px;top:188.5px">JVM</div>
<div class="td" style="left:899px;top:188.5px">com.menten</div>
<div class="tdb" style="left:9px;top:225px">EFFEMAIL</div>
<div class="abs" style="left:159px;top:227.5px;width:10px;height:10px;background:#808080"></div>
<div class="td" style="left:173px;top:225.5px">Inaktiv</div>
<div class="tdb" style="left:9px;top:262px">EFFFTP</div>
<div class="abs" style="left:159px;top:264.5px;width:10px;height:10px;background:#808080"></div>
<div class="td" style="left:173px;top:262.5px">Inaktiv</div>
<div class="tdb" style="left:9px;top:299px">EFFHTTP</div>
<div class="abs" style="left:159px;top:301.5px;width:10px;height:10px;background:#808080"></div>
<div class="td" style="left:173px;top:299.5px">Inaktiv</div>
<div class="tdb" style="left:9px;top:336px">EFFOCSP</div>
<div class="abs" style="left:159px;top:338.5px;width:10px;height:10px;background:#808080"></div>
<div class="td" style="left:173px;top:336.5px">Inaktiv</div>
<div class="tdb" style="left:9px;top:373px">EFFOFTP2</div>
<div class="abs" style="left:159px;top:375.5px;width:10px;height:10px;background:#808080"></div>
<div class="td" style="left:173px;top:373.5px">Inaktiv</div>
<div class="tdb" style="left:9px;top:410px">EFFREPORT</div>
<div class="abs" style="left:159px;top:412.5px;width:10px;height:10px;background:#808080"></div>
<div class="td" style="left:173px;top:410.5px">Inaktiv</div>
<div class="tdb" style="left:9px;top:447px">EFFSERVER</div>
<div class="abs" style="left:159px;top:449.5px;width:10px;height:10px;background:#808080"></div>
<div class="td" style="left:173px;top:447.5px">Inaktiv</div>
<div class="tdb" style="left:9px;top:484px">EFFSERVICE</div>
<div class="abs" style="left:159px;top:486.5px;width:10px;height:10px;background:#62b158"></div>
<div class="td" style="left:173px;top:484.5px">Aktiv</div>
<div class="td" style="left:259px;top:484.5px">QSYS</div>
<div class="td" style="left:379px;top:484.5px">DEQW</div>
<div class="td" style="left:479px;top:484.5px">626906/QSYS/EFFSERVICE</div>
<div class="td" style="left:699px;top:484.5px">SBS</div>
<div class="abs" style="left:159px;top:523.5px;width:10px;height:10px;background:#62b158"></div>
<div class="td" style="left:173px;top:521.5px">Aktiv</div>
<div class="td" style="left:259px;top:521.5px">IEFFECT</div>
<div class="td" style="left:379px;top:521.5px">TIMW</div>
<div class="td" style="left:479px;top:521.5px">626910/IEFFECT/EFFSERVICE</div>
<div class="td" style="left:699px;top:521.5px">ASJ</div>
<div class="td" style="left:799px;top:521.5px">CMD</div>
<div class="td" style="left:899px;top:521.5px">QSH</div>
<div class="abs" style="left:159px;top:560.5px;width:10px;height:10px;background:#62b158"></div>
<div class="td" style="left:173px;top:558.5px">Aktiv</div>
<div class="td" style="left:259px;top:558.5px">IEFFECT</div>
<div class="td" style="left:379px;top:558.5px">SELW</div>
<div class="td" style="left:479px;top:558.5px">627040/IEFFECT/QP0ZSPWT</div>
<div class="td" style="left:699px;top:558.5px">BCI</div>
<div class="td" style="left:799px;top:558.5px">JVM</div>
<div class="td" style="left:899px;top:558.5px">com.menten</div>
</div>
<div class="abs" style="left:851px;top:773px;width:1px;height:17px;background:#e5e9ee"></div>
<div class="abs" style="left:852px;top:774px;width:994px;height:16px;background:#f0f0f0"></div>
<div class="abs" style="left:869px;top:774px;width:502px;height:16px;background:#cdcdcd"></div>
<svg class="abs" style="left:855px;top:776.5px" width="10" height="10" viewBox="0 0 10 10"><path d="M6.5 1.5 L3 5 L6.5 8.5" fill="none" stroke="#505050" stroke-width="2"/></svg>
<svg class="abs" style="left:1832px;top:777px" width="10" height="10" viewBox="0 0 10 10"><path d="M3.5 1.5 L7 5 L3.5 8.5" fill="none" stroke="#505050" stroke-width="2"/></svg>
<div class="abs" style="left:1847px;top:210px;width:16px;height:580px;background:#f0f0f0"></div>
<div class="abs" style="left:1847px;top:227px;width:15px;height:254px;background:#cdcdcd"></div>
<svg class="abs" style="left:1849.5px;top:214px" width="10" height="10" viewBox="0 0 10 10"><path d="M1.5 6.5 L5 3 L8.5 6.5" fill="none" stroke="#505050" stroke-width="2"/></svg>
<svg class="abs" style="left:1850px;top:759px" width="10" height="10" viewBox="0 0 10 10"><path d="M1.5 3.5 L5 7 L8.5 3.5" fill="none" stroke="#505050" stroke-width="2"/></svg>
<svg class="abs" style="left:1870px;top:797px" width="8" height="8" viewBox="0 0 8 8"><path d="M6.6 1.2 V6.6 H1.2" fill="none" stroke="#333" stroke-width="1.5"/></svg>

<div id="ftrbar" class="abs"></div>
<div id="ftr" class="abs">
 <div class="abs" style="left:20px;top:9px;font-size:13.7px;white-space:nowrap">i-effect<sup style="font-size:11px;vertical-align:0;position:relative;top:-5px;margin-left:0.5px">®</sup> WebControl</div>
 <div class="abs" style="left:1335px;top:9px;font-size:13.2px;white-space:pre">i-effect: V2R8M0  ::  System: devp2:443  ::  Seriennummer: 785257X  ::  Partition: 10 (DEVP2)</div>
</div>
<div id="vscroll" class="abs">
 <div class="abs" style="left:0;top:0;width:1px;height:910px;background:#fafafa"></div>
 <div class="abs" style="left:1px;top:17px;width:15px;height:632px;background:#cdcdcd"></div>
 <svg class="abs" style="left:3.5px;top:4px" width="10" height="10" viewBox="0 0 10 10"><path d="M1.5 6.5 L5 3 L8.5 6.5" fill="none" stroke="#505050" stroke-width="2"/></svg>
 <svg class="abs" style="left:3.5px;top:896px" width="10" height="10" viewBox="0 0 10 10"><path d="M1.5 3.5 L5 7 L8.5 3.5" fill="none" stroke="#505050" stroke-width="2"/></svg>
</div>
<div class="abs" style="left:963px;top:482px;width:0;height:0;border-left:6px solid transparent;border-right:6px solid transparent;border-bottom:7px solid #a0a0a0;margin-left:-6px"></div>
<div class="abs" style="left:950px;top:494px;width:215px;height:35px;background:rgba(0,0,0,0.085)"></div>
<div class="abs" style="left:945px;top:488px;width:215px;height:35px;background:#fff;border:3px solid #e43e3c"></div>
<svg class="abs" style="left:964px;top:500px" width="13" height="13" viewBox="0 0 13 13">
 <circle cx="6.5" cy="6.5" r="6" fill="#666"/><path d="M5 3.6 L9.4 6.5 L5 9.4 Z" fill="#fff"/>
</svg>
<div class="abs" style="left:990px;top:498px;font-size:14px;color:#666;white-space:nowrap">Subsystem *FTP starten</div>
</body></html>
